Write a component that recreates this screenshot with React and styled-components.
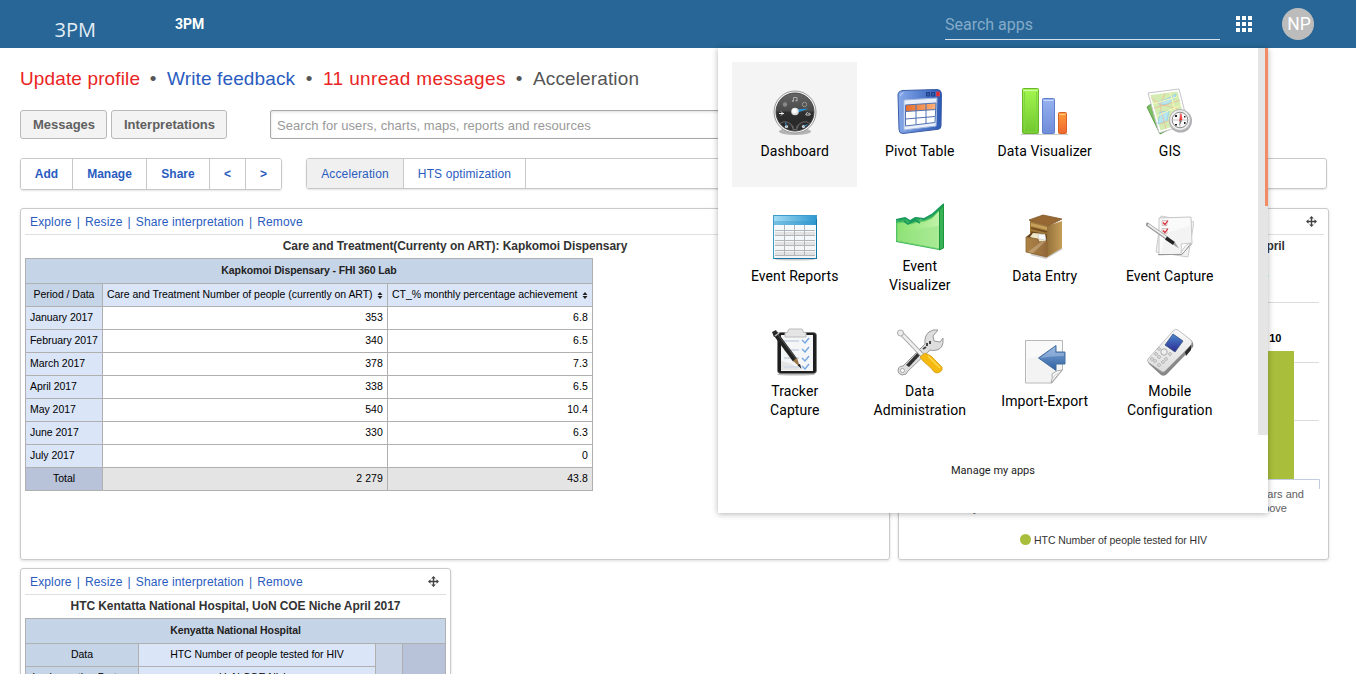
import React from 'react';
import styled, { createGlobalStyle } from 'styled-components';

const GlobalStyle = createGlobalStyle`
  * { box-sizing: border-box; }
  html, body { margin: 0; padding: 0; overflow: hidden; height: 674px; }
  body { font-family: "Liberation Sans", Arial, sans-serif; background: #fff; color: #000; }
`;

const Page = styled.div`
  position: relative;
  width: 1356px;
  height: 674px;
  overflow: hidden;
`;

const Header = styled.header`
  height: 48px;
  background: #276696;
  display: flex;
  align-items: center;
  color: #fff;
`;
const Logo = styled.div`
  width: 175px;
  padding: 12px 0 0 54.5px;
  font: 20px/28px "Open Sans", sans-serif;
  color: #e4edf4;
`;
const AppName = styled.div`
  font: 700 14px/20px Roboto, sans-serif;
  flex: 1;
`;
const SearchApps = styled.div`
  width: 275px;
  height: 33px;
  margin: -1px 15px 0 0;
  padding-top: 6px;
  border-bottom: 1px solid #d5e1ea;
  font: 16px/24px Roboto, sans-serif;
  color: #84abc9;
`;
const Avatar = styled.div`
  width: 32px;
  height: 32px;
  margin: 0 42px 0 29px;
  border-radius: 50%;
  background: #bcbcbc;
  display: flex;
  align-items: center;
  justify-content: center;
  padding-left: 2px;
  font: 17.5px/32px Roboto, sans-serif;
`;

const Main = styled.main`
  padding: 0 27px 0 20px;
`;
const Links = styled.nav`
  display: flex;
  padding-top: 17px;
  height: 62px;
  font-size: 19px;
  line-height: 28px;
  white-space: pre;
  color: #555;
`;
const TopLink = styled.span`
  color: ${p => p.$c};
  width: ${p => p.$w}px;
  letter-spacing: ${p => p.$ls || 0.13}px;
`;
const Dot = styled.span`
  width: 28px;
  text-align: center;
`;
const SearchRow = styled.div`
  display: flex;
  gap: 4px;
  height: 48px;
  padding-right: 75px;
`;
const GreyButton = styled.div`
  width: ${p => p.$w}px;
  height: 29px;
  border: 1px solid #b9b9b9;
  border-radius: 3px;
  background: #f3f3f3;
  color: #606060;
  font-weight: bold;
  font-size: 13px;
  line-height: 28px;
  text-align: center;
  padding-left: 1px;
`;
const SearchBox = styled.div`
  flex: 1;
  margin-left: 39px;
  height: 29px;
  border: 1px solid #a8a8a8;
  border-radius: 2px;
  box-shadow: inset 0 1px 3px #ddd;
  padding-left: 6px;
  font-size: 13px;
  line-height: 29px;
  color: #999;
  letter-spacing: 0.06px;
`;
const TabsRow = styled.div`
  display: flex;
  gap: 24px;
  height: 50px;
  padding-right: 2px;
`;
const Group = styled.div`
  display: flex;
  flex: ${p => (p.$grow ? 1 : 'none')};
  height: ${p => (p.$grow ? 31 : 32)}px;
  border: 1px solid #c8c8c8;
  border-radius: 3px;
  box-shadow: 0 1px 2px #e4e4e4;
  overflow: hidden;
`;
const Tab = styled.div`
  width: ${p => p.$w}px;
  border-right: ${p => (p.$last ? 0 : 1)}px solid #c8c8c8;
  background: ${p => (p.$active ? '#f0f0f0' : '#fff')};
  color: #2a5cc0;
  font-weight: ${p => (p.$bold ? 'bold' : 'normal')};
  font-size: 12px;
  line-height: 30px;
  text-align: center;
  letter-spacing: ${p => (p.$bold ? 0 : 0.12)}px;
`;

const Board = styled.div`
  display: grid;
  grid-template-columns: 870px 431px;
  grid-template-rows: 352px 352px;
  gap: 8px;
`;
const Card = styled.section`
  width: ${p => p.$w}px;
  height: 352px;
  border: 1px solid #cacaca;
  border-radius: 3px;
  box-shadow: 0 1px 3px #ddd;
  padding: 0 4px;
`;
const CardBar = styled.div`
  height: 26px;
  border-bottom: 1px solid #dfdfdf;
  display: flex;
  justify-content: space-between;
  padding: 0 7px 0 5px;
  font-size: 12px;
  line-height: 26px;
  color: #2a5cc0;
  letter-spacing: 0.14px;
`;
const Actions = styled.div`
  display: flex;
  gap: 5px;
`;
const CardTitle = styled.div`
  height: 23px;
  text-align: center;
  font-weight: bold;
  font-size: 12px;
  line-height: 22px;
  color: #333;
  white-space: nowrap;
  letter-spacing: -0.08px;
`;
const MoveIcon = styled.svg`
  width: 11px;
  height: 11px;
  margin-top: 7px;
`;

const Table = styled.table`
  border-collapse: collapse;
  table-layout: fixed;
  width: ${p => p.$w}px;
  font-size: 10.5px;
  line-height: 12px;
  color: #000;
`;
const Cell = styled.td`
  border: 1px solid #b0b0b0;
  height: ${p => p.$h || 23}px;
  padding: 0 4px ${p => (p.$h ? 2 : 3)}px;
  background: ${p => p.$bg || '#fff'};
  text-align: ${p => p.$align || 'right'};
  font-weight: ${p => (p.$bold ? 'bold' : 'normal')};
  color: ${p => (p.$bold ? '#222' : '#000')};
  white-space: nowrap;
  letter-spacing: ${p => (p.$bold ? -0.1 : p.$align ? -0.04 : 0.1)}px;
`;
const Head = styled.div`
  display: flex;
  align-items: center;
  justify-content: space-between;
  svg { margin-top: 3px; }
`;

const Menu = styled.div`
  position: absolute;
  left: 718px;
  top: 48px;
  width: 550px;
  height: 465px;
  background: #fff;
  box-shadow: 0 1px 6px rgba(0, 0, 0, 0.3);
`;
const MenuScroll = styled.div`
  display: flex;
  justify-content: space-between;
  height: 387px;
  overflow: hidden;
`;
const Apps = styled.div`
  display: grid;
  grid-template-columns: repeat(4, 125px);
  grid-auto-rows: 125px;
  padding: 14px;
`;
const Tile = styled.div`
  display: flex;
  flex-direction: column;
  align-items: center;
  justify-content: center;
  background: ${p => (p.$active ? '#f4f4f4' : 'transparent')};
  font: 14px/19px Roboto, sans-serif;
  letter-spacing: 0.08px;
  text-align: center;
  padding: 0 0 1px 0.5px;
  svg { display: block; margin-bottom: 6px; flex: none; }
`;
const Label = styled.span`
  width: 100px;
  white-space: pre-line;
`;
const Track = styled.div`
  width: 10px;
  background: #e5e5e5;
  display: flex;
  justify-content: flex-end;
`;
const Thumb = styled.div`
  width: 3px;
  height: 158px;
  background: #f08d66;
`;
const Manage = styled.div`
  padding-top: 27px;
  text-align: center;
  font: 11px/18px Roboto, sans-serif;
  color: #222;
`;

const Svg = ({ children }) => <svg width="48" height="48" viewBox="0 0 48 48">{children}</svg>;
const Grad = ({ id, a, b, flat }) => (
  <linearGradient id={id} x1="0" y1="0" x2={flat ? 1 : 0} y2={flat ? 0 : 1}>
    <stop stopColor={a} /><stop offset="1" stopColor={b} />
  </linearGradient>
);

const Dashboard = () => (
  <Svg>
    <defs><Grad id="dial" a="#666" b="#2a2a2a" /></defs>
    <ellipse cx="24" cy="43.500" rx="16" ry="3.500" fill="#b4b4b4" />
    <g transform="translate(0 .5)">
      <circle cx="24" cy="23.500" r="21" fill="#f5f5f5" stroke="#999" />
      <circle cx="24" cy="23.500" r="19" fill="url(#dial)" stroke="#444" />
      <path d="M5.500 23h37a19 19 0 0 1-7 15c-5-5-9-4-12 1-3-5-6-6-11-1A19 19 0 0 1 5.500 23z" fill="#222" opacity=".6" />
      <g fill="none" stroke="#777" strokeWidth=".8"><path d="M9 35a8 8 0 0 1 13 5M26 40a8 8 0 0 1 13-5M22 37v4h4v-4" /></g>
      <circle cx="14" cy="16" r="2.200" fill="#888" /><circle cx="33.500" cy="16" r="2.200" fill="#555" stroke="#999" />
      <path d="M22.500 12.500V9h3.500v3" stroke="#aaa" fill="none" /><circle cx="22" cy="12.500" r="1" fill="#aaa" /><circle cx="25.500" cy="12" r="1" fill="#aaa" />
      <path d="M8 25h5M10 23l2 2-2 2" stroke="#eee" fill="none" />
      <path d="M35 26.500h4c1-1.500-1-2.500-1.500-1.500-1-1.500-2.500-1-2 .5-1 0-1 1-.5 1z" stroke="#ccc" fill="none" />
      <path d="M25 21l13-1-13 4.500z" fill="#279ae0" />
      <circle cx="24" cy="23" r="3.800" fill="#ddd" /><circle cx="23.500" cy="22.500" r="2.400" fill="#fff" />
      <circle cx="15.500" cy="38" r="1.600" fill="#ddd" /><circle cx="32.500" cy="38" r="1.600" fill="#ddd" />
      <path d="M15.500 38l-1-4M32.500 38l4-2" stroke="#399bd0" />
    </g>
  </Svg>
);
const Pivot = () => (
  <Svg>
    <defs><Grad id="pf" a="#86a9ea" b="#2c59b4" flat /><Grad id="po" a="#e66c28" b="#ffb37b" flat /></defs>
    <path d="M7 2.500 41 1.500q4 0 4.500 4L45 38q0 3-3 3.300L7 45.500q-4 0-4-4L2 7q0-4 5-4.500z" fill="url(#pf)" stroke="#3a5da8" />
    <path d="M4.500 8q0-3 3-3" stroke="#bdd0f7" fill="none" />
    <path d="M8 12l33-2-1 28-32 4z" fill="#eaf0fc" stroke="#a5b8df" />
    <path d="M9.500 17 40 15l-1 19.500L9.500 38z" fill="#fff" />
    <path d="M9.500 17 40 15v6.500l-30.500 2z" fill="url(#po)" />
    <path d="M9.500 17 40 15l-1 19.500L9.500 38zM9.500 23.500 40 21.500M9.500 31 39 28.500M20 16.500v20M30 16v20" fill="none" stroke="#5073b4" />
    <path d="M30.500 4.500h3v3.500h-3zM35.500 4.500h3v3.500h-3z" fill="#345caf" stroke="#203d82" /><path d="M40.500 4h3v4h-3z" fill="#e8242e" stroke="#d04050" />
  </Svg>
);
const Bars = () => (
  <Svg>
    <defs><Grad id="bg" a="#a4f750" b="#70c72e" /><Grad id="bb" a="#96b2f0" b="#6f8cd9" /><Grad id="bo" a="#ff9d3a" b="#ef672d" /></defs>
    <path d="M0 46.500h47" stroke="#ccc" />
    <rect x="1.500" y=".5" width="16" height="45" rx="1" fill="url(#bg)" stroke="#6ab72f" /><path d="M2.500 2.500h14" stroke="#d2ffac" />
    <path d="M3.500 4v40h12V4" stroke="#7fd540" fill="none" />
    <rect x="21.500" y="10.500" width="12" height="35" rx="1" fill="url(#bb)" stroke="#5f80ce" /><path d="M22.500 12.500h10" stroke="#cbd9ff" />
    <rect x="37.500" y="24.500" width="8" height="21" rx="1" fill="url(#bo)" stroke="#d96226" /><path d="M38.500 26.500h6" stroke="#ffd083" />
  </Svg>
);
const Gis = () => (
  <Svg>
    <path d="M1 19l13 27 14-7L5 16z" fill="#7fbd61" stroke="#5ea350" />
    <path d="M2 5 33 1l9 35-29 9z" fill="#fff" stroke="#c4c4c4" />
    <path d="M4.500 7 31.500 3.500l7.500 31-24.500 8z" fill="#d4ebb2" />
    <path d="M12 14l9-3 9-5-1 4-7 6-8 1zM14 24l9-1-2 10-9 3z" fill="#b5e5ee" stroke="#9dd6e2" />
    <path d="M5 10l12 8 17-6M8 20l10-3 16 5M19 5l-5 13 6 23M14 36l20-8" stroke="#ebbd98" strokeWidth=".8" fill="none" />
    <path d="M7 16l24-7M9 29l26-12M24 4l8 28" stroke="#fbf6b8" fill="none" />
    <circle cx="34.500" cy="33" r="11.500" fill="#aeb0b4" /><circle cx="34" cy="32" r="10.500" fill="#eee" stroke="#b6b6b6" /><circle cx="34" cy="32" r="7.800" fill="#fafafa" stroke="#8b8b8b" />
    <path d="M34 25v14M27 32h14" stroke="#bbb" strokeWidth=".8" />
    <path d="M33.500 33 35 25.500 36 32z" stroke="#e33" fill="#e33" strokeWidth=".6" /><path d="M34 32l-1 6 3-5z" fill="#777" />
    <path d="M29 27h2v2h-2zM38 34h1.500v2H38zM29 36h2v1.500h-2zM38 28h1.500v1.500H38z" fill="#222" />
  </Svg>
);
const Reports = () => (
  <Svg>
    <defs><Grad id="rg" a="#f3fbff" b="#f4f4f4" /><Grad id="rh" a="#a3dcf4" b="#2f98cf" flat /></defs>
    <ellipse cx="24" cy="46.500" rx="20" ry="1" fill="#ccc" />
    <rect x="2.500" y="2.500" width="43" height="43" fill="url(#rg)" stroke="#3d9dc9" />
    <path d="M3 45.500h43M45.500 6v40" stroke="#1276a8" />
    <path d="M3 3h42v9H3z" fill="url(#rh)" /><path d="M3 8h42v4H3z" fill="#3396cd" opacity=".4" />
    <path d="M4 19h40v3H4zM4 29h40v3H4zM4 39h40v3H4z" fill="#e2e2e2" />
    <path d="M4 17.500h40M4 22.500h40M4 27.500h40M4 32.500h40M4 37.500h40M4 42.500h40M13.500 12v31M23.500 12v31M33.500 12v31" stroke="#b2b6b9" />
  </Svg>
);
const Area = () => (
  <Svg>
    <defs><Grad id="ag" a="#8ae26f" b="#c0f3a9" flat /></defs>
    <path d="M0 18l8-3 5 3 6-4 6 3 9-4L48 1v44l-5 2L0 39z" fill="#37b45e" />
    <path d="M1 20l9-1 5 2 6-2 8-1 7-3 8-8v39L1 38z" fill="url(#ag)" stroke="#6dd06a" />
    <path d="M4 29q20-3 39-6v22L1 37z" fill="#96e283" opacity=".5" />
    <path d="M0 17l9-2 5 3 6-3 8 1 9-5L48 1M8 18l4 3 7-4 5 3" stroke="#189a5c" strokeWidth="1.800" fill="none" />
    <path d="M43.500 7l4-5v43l-4 2z" fill="#37b354" stroke="#1c9440" />
  </Svg>
);
const Drawer = () => (
  <Svg>
    <defs><Grad id="df" a="#ae8545" b="#93693c" flat /><Grad id="ds" a="#95713a" b="#c59d58" flat /></defs>
    <path d="M9 42l16 4 17-10-8-5z" fill="#aaa" opacity=".6" />
    <path d="M9 7l17 6v31L9 40z" fill="#a27838" /><path d="M26 13 41 8v27L26 44z" fill="url(#ds)" />
    <path d="M8 7 22 2l19 4-14 7z" fill="#976834" stroke="#80582a" strokeWidth=".8" />
    <path d="M10 10l16 4v3l-16-4z" fill="#c7a05c" />
    <path d="M10 15l16 4M10 19l16 3" stroke="#6d4a20" strokeWidth="1.500" />
    <path d="M5 24l5-4 16 3v8z" fill="#63441e" />
    <path d="M9 24l3-4 12 1 1 7-6 1z" fill="#eee7c8" /><path d="M17 21l7 1 1 5-7-1z" fill="#fafafa" stroke="#bbb" strokeWidth=".5" />
    <path d="M5 24l12 2 1 3 8-1v16L5 39z" fill="url(#df)" stroke="#8b6231" strokeWidth=".8" />
    <path d="M7 39l14-11h4L12 40z" fill="#e0caa9" opacity=".4" />
  </Svg>
);
const EventCapture = () => (
  <Svg>
    <path d="M15 3 48 9 42 44 10 39z" fill="#f1f1f1" stroke="#ccc" /><path d="M13 5l32-1 1 27-10 10-23 1z" fill="#fafafa" stroke="#c6c6c6" />
    <path d="M20 20l24-7 1 17-10 10-20 1z" fill="#ececec" opacity=".55" />
    <path d="M45 30q-6 1-10 10 1-5 0-9z" fill="#fff" stroke="#ccc" /><path d="M12 41.500h24l9-11" stroke="#999" fill="none" />
    <path d="M16 7.500h5v5h-5zM16 15.500h5v5h-5z" fill="#fbeaea" stroke="#c9b9b9" strokeWidth=".8" /><path d="M17 9.500l2 2 3-4M17 17.500l2 2 3-4" stroke="#d32935" strokeWidth="1.200" fill="none" />
    <path d="M1.500 11.500l20 14" stroke="#999" strokeWidth="3.600" strokeLinecap="round" /><path d="M2 11.500l20 14" stroke="#eee" strokeWidth="1.800" />
    <path d="M20 25l8 5.500" stroke="#222" strokeWidth="3.400" /><path d="M27 31.500l6 4-4-6z" fill="#999" />
  </Svg>
);
const Tracker = () => (
  <Svg>
    <ellipse cx="25" cy="46.500" rx="19" ry="1" fill="#bbb" />
    <rect x="6.500" y="4.500" width="39" height="41" rx="3" fill="#1e1e1e" stroke="#777" strokeWidth=".7" /><path d="M10 7h32v36H10z" fill="#f4f6f8" />
    <path d="M10 33q10 1 20 9H10v-9z" fill="#ddd" opacity=".7" />
    <path d="M18 1h13q1 0 1 3l3 1v4H14V5l3-1q0-3 1-3z" fill="#e5e5e5" stroke="#bbb" />
    <path d="M13 13h15M13 22h15M13 30h15M13 39h15" stroke="#d5dce7" strokeWidth="1.800" />
    <path d="M31 12l3 3 4-5M31 21l3 3 4-5M31 30l3 3 4-5M31 38l3 3 4-5" stroke="#76a6de" strokeWidth="1.400" fill="none" />
    <path d="M4 5l20 27" stroke="#222" strokeWidth="5" /><path d="M5 4l21 28" stroke="#555" />
    <path d="M1 4l4-2 2 4-4 3z" fill="#292929" /><path d="M4 8l4-3" stroke="#bbb" strokeWidth="1.500" />
    <path d="M22 33l4-3 3 9z" fill="#9b7646" /><path d="M26.500 37l4 4-1.500-5z" fill="#222" />
  </Svg>
);
const Tools = () => (
  <Svg>
    <path d="M2 43q0-5 5-5L29 16q-1-8 4-12 4-3 9-2l-5 6 1 5 6 1 3-4q1 10-6 12-5 1-7 0L12 43q-1 4-6 4-4-1-4-4z" fill="#dedede" stroke="#999" />
    <path d="M10 37l14-15 2 3-13 14z" fill="#333" /><circle cx="6.500" cy="42.500" r="2" fill="#fff" stroke="#aaa" />
    <path d="M27 21l3-2M31 15v3M34 13v3" stroke="#444" strokeWidth="2" />
    <path d="M5 5l21 22" stroke="#999" strokeWidth="4.600" /><path d="M5 5l21 22" stroke="#eee" strokeWidth="3" /><circle cx="4.500" cy="5" r="3" fill="#eee" stroke="#aaa" />
    <path d="M24 29l5-4 6 3 11 11q1 5-5 6-3 0-6-5l-8-7z" fill="#f5b910" stroke="#d09a17" strokeWidth=".8" /><path d="M32 28l12 12" stroke="#ffd951" strokeWidth="1.500" />
  </Svg>
);
const Import = () => (
  <Svg>
    <defs><Grad id="ia" a="#85aadb" b="#2c5f9f" /></defs>
    <g transform="translate(-1 -1)">
      <path d="M5.500 3.500h37V33L32 46H5.500z" fill="#f9f9f9" stroke="#b7b7b7" />
      <path d="M7 22l34-8v18L30 45H7z" fill="#eee" opacity=".6" />
      <path d="M31 46q2-5 1-9 5-4 10-4z" fill="#fff" stroke="#aaa" /><path d="M33 41l2-3 4-2" stroke="#ccc" fill="none" />
      <path d="M18.500 21 36 8.500V15h9v12h-9v6.500z" fill="url(#ia)" stroke="#446e9f" /><path d="M20 21 35 10v6h9v3q-12 0-24 2z" fill="#b1c9e8" opacity=".45" />
    </g>
  </Svg>
);
const Mobile = () => (
  <Svg>
    <defs><Grad id="mf" a="#fafafa" b="#dcdcdc" /><Grad id="ms" a="#4b88ce" b="#2b2a92" /></defs>
    <path d="M2 34 27 4q3-3 5-1l14 10q2 3 1 6L22 45q-3 4-7 2L3 36z" fill="#888" />
    <path d="M2 31 27 3q3-3 5-1l13 10q2 2 0 5L19 43q-2 2-4 0L2 34q-1-1 0-3z" fill="url(#mf)" stroke="#b3b3b3" strokeWidth=".8" />
    <path d="M39 24l6-7v5l-5 6z" fill="#282828" /><path d="M27 6l10 7-8 11-10-7z" fill="url(#ms)" stroke="#3c5380" strokeWidth=".8" />
    <circle cx="18" cy="24" r="3.200" fill="#eee" stroke="#999" strokeWidth=".8" />
    <g fill="#eee" stroke="#999" strokeWidth=".7">{[[6, 31], [10, 26], [13, 21], [9, 33], [13, 29], [20, 31], [24, 26], [13, 37], [17, 34]].map((p, i) => <circle key={i} cx={p[0]} cy={p[1]} r="1.400" />)}</g>
  </Svg>
);

const APPS = [
  ['Dashboard', Dashboard], ['Pivot Table', Pivot], ['Data Visualizer', Bars], ['GIS', Gis],
  ['Event Reports', Reports], ['Event\nVisualizer', Area], ['Data Entry', Drawer], ['Event Capture', EventCapture],
  ['Tracker\nCapture', Tracker], ['Data\nAdministration', Tools], ['Import-Export', Import], ['Mobile\nConfiguration', Mobile],
];

const ROWS = [
  ['January 2017', '353', '6.8'], ['February 2017', '340', '6.5'], ['March 2017', '378', '7.3'],
  ['April 2017', '338', '6.5'], ['May 2017', '540', '10.4'], ['June 2017', '330', '6.3'], ['July 2017', '', '0'],
];

const Move = () => (
  <MoveIcon viewBox="0 0 11 11">
    <path d="M5.500 1v9M1 5.500h9" stroke="#444" strokeWidth="1.400" />
    <path d="M5.500 0l2.300 2.500H3.200zM5.500 11l2.300-2.500H3.200zM0 5.500l2.500-2.300v4.600zM11 5.500 8.500 3.200v4.600z" fill="#444" />
  </MoveIcon>
);
const Sort = () => (
  <svg width="6" height="7" viewBox="0 0 6 7"><path d="M3 0l2.500 3h-5zM3 7l2.500-3h-5z" fill="#222" /></svg>
);
const Bar = ({ move }) => (
  <CardBar>
    <Actions><span>Explore</span><span>|</span><span>Resize</span><span>|</span><span>Share interpretation</span><span>|</span><span>Remove</span></Actions>
    {move && <Move />}
  </CardBar>
);

const Chart = () => (
  <svg width="421" height="300" viewBox="903 258 421 300" fontFamily="Liberation Sans, Arial, sans-serif">
    <text x="1269" y="277" fontSize="11" textAnchor="end" fill="#48a8d8">Filter.</text>
    <path d="M930 302.500h389M930 362.500h389M930 420.500h389" stroke="#dcdcdc" />
    <path d="M1230 351h64v128h-64z" fill="#a9be3b" />
    <path d="M930 479.500h389.500V489" stroke="#c3cde0" fill="none" />
    <text x="1281.500" y="342" fontSize="11" fontWeight="bold" textAnchor="end">10</text>
    <g fontSize="11" fill="#606060">
      <text x="1304" y="498" textAnchor="end">15 years and</text>
      <text x="1287" y="512" textAnchor="end">above</text>
      <text x="973" y="512">years</text>
    </g>
    <circle cx="1025.500" cy="539.500" r="5.500" fill="#a9be3b" />
    <text x="1034" y="544" fontSize="10.500" fill="#333" textLength="173">HTC Number of people tested for HIV</text>
  </svg>
);

export default function App() {
  return (
    <Page>
      <GlobalStyle />
      <Header>
        <Logo>3PM</Logo>
        <AppName>3PM</AppName>
        <SearchApps>Search apps</SearchApps>
        <svg width="18" height="18" viewBox="0 0 18 18" fill="#fff">
          {[1, 7, 13].map(y => [1, 7, 13].map(x => <rect key={x + '-' + y} x={x} y={y} width="4" height="4" />))}
        </svg>
        <Avatar>NP</Avatar>
      </Header>
      <Main>
        <Links>
          <TopLink $c="#ea2424" $w={119}>Update profile</TopLink><Dot>•</Dot>
          <TopLink $c="#2a5cc0" $w={128}>Write feedback</TopLink><Dot>•</Dot>
          <TopLink $c="#ea2424" $w={182} $ls={0.38}>11 unread messages</TopLink><Dot>•</Dot>
          <TopLink $c="#555" $w={107}>Acceleration</TopLink>
        </Links>
        <SearchRow>
          <GreyButton $w={87}>Messages</GreyButton>
          <GreyButton $w={116}>Interpretations</GreyButton>
          <SearchBox>Search for users, charts, maps, reports and resources</SearchBox>
        </SearchRow>
        <TabsRow>
          <Group>
            <Tab $w={52} $bold>Add</Tab><Tab $w={74} $bold>Manage</Tab><Tab $w={63} $bold>Share</Tab>
            <Tab $w={36} $bold>&lt;</Tab><Tab $w={35} $bold $last>&gt;</Tab>
          </Group>
          <Group $grow>
            <Tab $w={97} $active>Acceleration</Tab><Tab $w={122}>HTS optimization</Tab>
          </Group>
        </TabsRow>
        <Board>
          <Card $w={870}>
            <Bar />
            <CardTitle>Care and Treatment(Currenty on ART): Kapkomoi Dispensary</CardTitle>
            <Table $w={568}>
              <colgroup><col width="77" /><col width="285" /><col width="205" /></colgroup>
              <tbody>
                <tr><Cell colSpan={3} $h={25} $bg="#c6d4e7" $align="center" $bold>Kapkomoi Dispensary - FHI 360 Lab</Cell></tr>
                <tr>
                  <Cell $bg="#c6d4e7" $align="center">Period / Data</Cell>
                  <Cell $bg="#dae5f8" $align="left"><Head>Care and Treatment Number of people (currently on ART)<Sort /></Head></Cell>
                  <Cell $bg="#dae5f8" $align="left"><Head>CT_% monthly percentage achievement<Sort /></Head></Cell>
                </tr>
                {ROWS.map(r => (
                  <tr key={r[0]}><Cell $bg="#dae5f8" $align="left">{r[0]}</Cell><Cell>{r[1]}</Cell><Cell>{r[2]}</Cell></tr>
                ))}
                <tr><Cell $bg="#b8c3d9" $align="center">Total</Cell><Cell $bg="#e4e4e4">2 279</Cell><Cell $bg="#e4e4e4">43.8</Cell></tr>
              </tbody>
            </Table>
          </Card>
          <Card $w={431}>
            <Bar move />
            <CardTitle>HTC Kentatta National Hospital, UoN COE Niche by Age April</CardTitle>
            <Chart />
          </Card>
          <Card $w={431}>
            <Bar move />
            <CardTitle>HTC Kentatta National Hospital, UoN COE Niche April 2017</CardTitle>
            <Table $w={421}>
              <colgroup><col width="113" /><col width="237" /><col width="27" /><col width="43" /></colgroup>
              <tbody>
                <tr><Cell colSpan={4} $h={25} $bg="#c6d4e7" $align="center" $bold>Kenyatta National Hospital</Cell></tr>
                <tr>
                  <Cell $bg="#c6d4e7" $align="center">Data</Cell><Cell $bg="#dae5f8" $align="center">HTC Number of people tested for HIV</Cell>
                  <Cell rowSpan={2} $bg="#c9d3e6" /><Cell rowSpan={2} $bg="#b8c3d9" />
                </tr>
                <tr><Cell $bg="#c6d4e7" $align="center">Implementing Partner</Cell><Cell $bg="#dae5f8" $align="center">UoN COE Niche</Cell></tr>
              </tbody>
            </Table>
          </Card>
        </Board>
      </Main>
      <Menu>
        <MenuScroll>
          <Apps>
            {APPS.map(([name, Icon], i) => <Tile key={name} $active={i === 0}><Icon /><Label>{name}</Label></Tile>)}
          </Apps>
          <Track><Thumb /></Track>
        </MenuScroll>
        <Manage>Manage my apps</Manage>
      </Menu>
    </Page>
  );
}
